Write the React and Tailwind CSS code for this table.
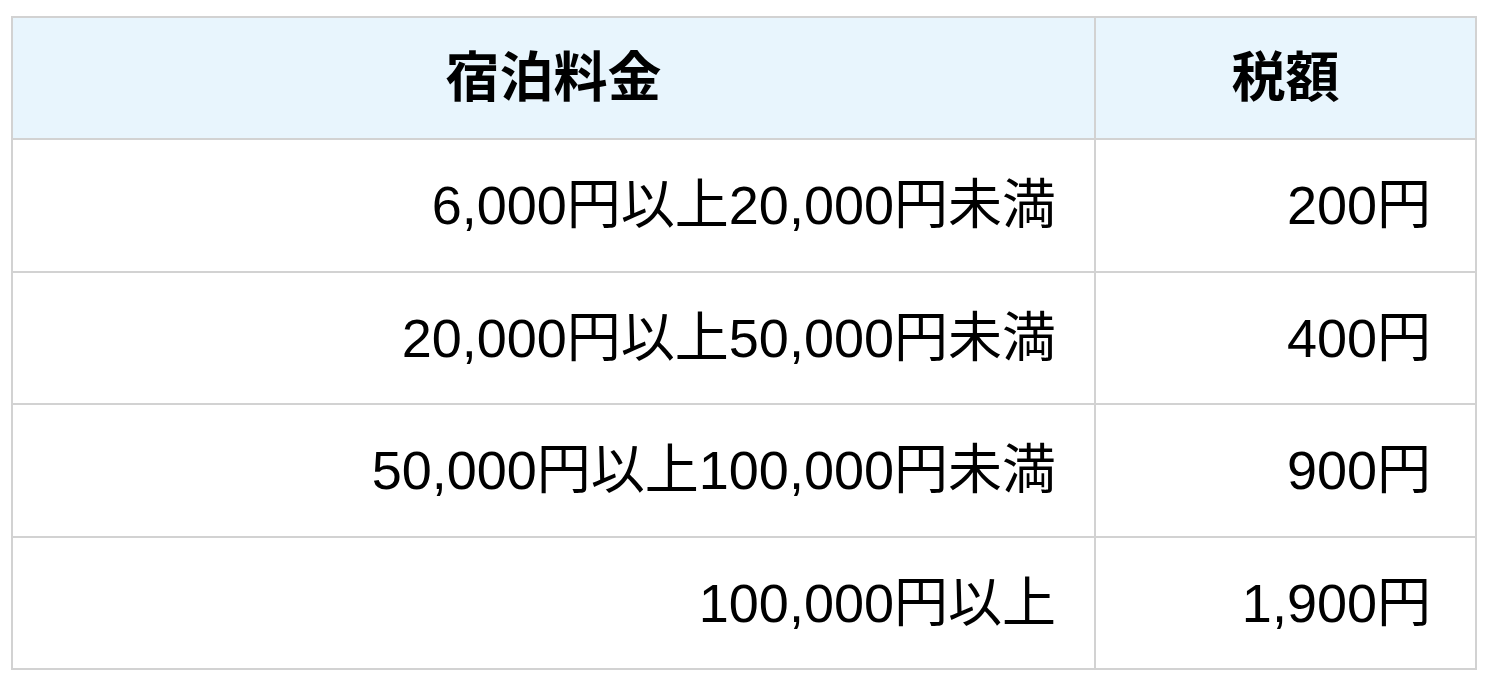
const rows = [
  { range: '6,000円以上20,000円未満', tax: '200円' },
  { range: '20,000円以上50,000円未満', tax: '400円' },
  { range: '50,000円以上100,000円未満', tax: '900円' },
  { range: '100,000円以上', tax: '1,900円' },
];

export default function App() {
  return (
    <div
      className="bg-white w-[1490px] h-[685px] pt-[16px] pl-[11px]"
      style={{ fontFamily: '"Liberation Sans", "Noto Sans CJK JP", sans-serif' }}
    >
      <table className="w-[1466px] border-collapse text-[54px] text-black">
        <thead>
          <tr className="bg-[#e8f5fd]">
            <th className="h-[122px] w-[1083px] border-2 border-[#d2d2d2] font-bold text-center leading-none">
              宿泊料金
            </th>
            <th className="h-[122px] border-2 border-[#d2d2d2] font-bold text-center leading-none">
              税額
            </th>
          </tr>
        </thead>
        <tbody>
          {rows.map((r) => (
            <tr key={r.range}>
              <td className="h-[132.5px] border-2 border-[#d2d2d2] text-right pr-[38px] leading-none">
                {r.range}
              </td>
              <td className="h-[132.5px] border-2 border-[#d2d2d2] text-right pr-[44px] leading-none">
                {r.tax}
              </td>
            </tr>
          ))}
        </tbody>
      </table>
    </div>
  );
}
